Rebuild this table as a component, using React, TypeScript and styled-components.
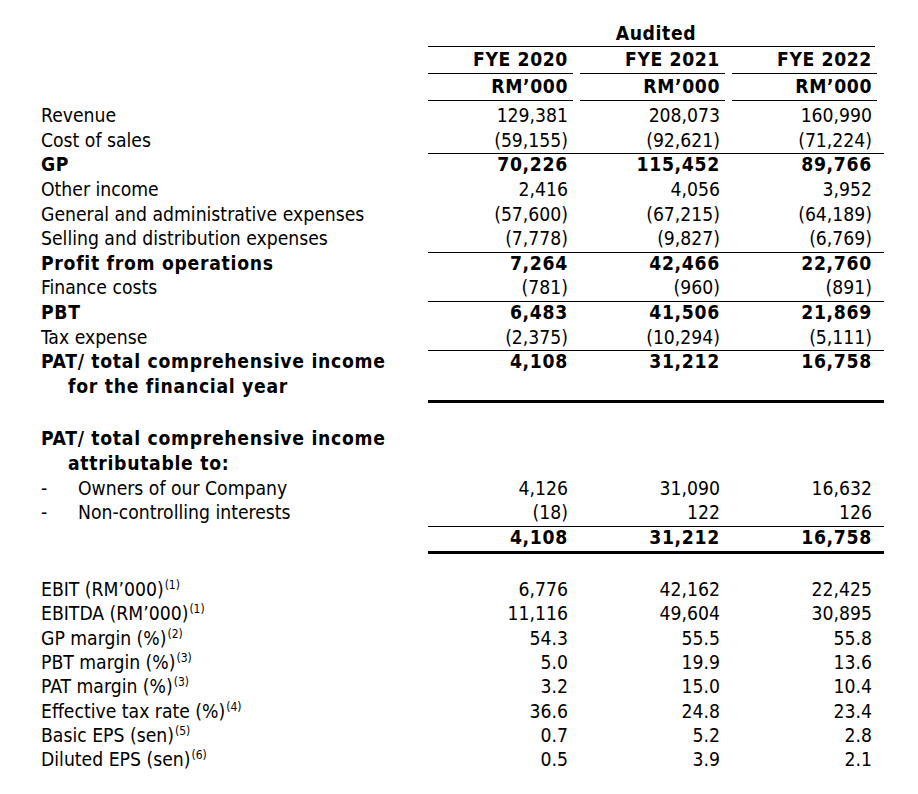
import React from "react";
import styled, { createGlobalStyle } from "styled-components";

type Rule = "none" | "thin" | "thick";

interface Line {
  label?: string;
  note?: string;
  values?: string[];
  bold?: boolean;
  indent?: boolean;
  bullet?: boolean;
  rule?: Rule;
  spacer?: boolean;
  tight?: boolean;
}

const ROW = 24.65;
const TIGHT = 24.3;

const income: Line[] = [
  { label: "Revenue", values: ["129,381", "208,073", "160,990"] },
  { label: "Cost of sales", values: ["(59,155)", "(92,621)", "(71,224)"], rule: "thin" },
  { label: "GP", values: ["70,226", "115,452", "89,766"], bold: true },
  { label: "Other income", values: ["2,416", "4,056", "3,952"] },
  { label: "General and administrative expenses", values: ["(57,600)", "(67,215)", "(64,189)"] },
  { label: "Selling and distribution expenses", values: ["(7,778)", "(9,827)", "(6,769)"], rule: "thin" },
  { label: "Profit from operations", values: ["7,264", "42,466", "22,760"], bold: true },
  { label: "Finance costs", values: ["(781)", "(960)", "(891)"], rule: "thin" },
  { label: "PBT", values: ["6,483", "41,506", "21,869"], bold: true },
  { label: "Tax expense", values: ["(2,375)", "(10,294)", "(5,111)"], rule: "thin" },
  { label: "PAT/ total comprehensive income", values: ["4,108", "31,212", "16,758"], bold: true },
  { label: "for the financial year", bold: true, indent: true, rule: "thick" },
  { spacer: true },
  { label: "PAT/ total comprehensive income", bold: true },
  { label: "attributable to:", bold: true, indent: true },
  { label: "Owners of our Company", bullet: true, values: ["4,126", "31,090", "16,632"] },
  { label: "Non-controlling interests", bullet: true, values: ["(18)", "122", "126"], rule: "thin" },
  { values: ["4,108", "31,212", "16,758"], bold: true, rule: "thick" },
  { spacer: true },
  { label: "EBIT (RM’000)", note: "(1)", values: ["6,776", "42,162", "22,425"], tight: true },
  { label: "EBITDA (RM’000)", note: "(1)", values: ["11,116", "49,604", "30,895"], tight: true },
  { label: "GP margin (%)", note: "(2)", values: ["54.3", "55.5", "55.8"], tight: true },
  { label: "PBT margin (%)", note: "(3)", values: ["5.0", "19.9", "13.6"], tight: true },
  { label: "PAT margin (%)", note: "(3)", values: ["3.2", "15.0", "10.4"], tight: true },
  { label: "Effective tax rate (%)", note: "(4)", values: ["36.6", "24.8", "23.4"], tight: true },
  { label: "Basic EPS (sen)", note: "(5)", values: ["0.7", "5.2", "2.8"], tight: true },
  { label: "Diluted EPS (sen)", note: "(6)", values: ["0.5", "3.9", "2.1"], tight: true },
];

const years = ["FYE 2020", "FYE 2021", "FYE 2022"];

const rowHeight = (line: Line) => {
  const base = line.tight ? TIGHT : ROW;
  return line.rule === "thick" ? base + 3 : base;
};

const App: React.FC = () => {
  return (
    <>
      <GlobalStyle />
      <Page>
        <Row $h={26}>
          <span />
          <Audited>Audited</Audited>
        </Row>
        <Row $h={27}>
          <span />
          {years.map((y) => (
            <HeadCell key={y}>{y}</HeadCell>
          ))}
        </Row>
        <Row $h={27}>
          <span />
          {years.map((y) => (
            <HeadCell key={y}>RM’000</HeadCell>
          ))}
        </Row>
        <Body>
          {income.map((line, i) =>
            line.spacer ? (
              <Row key={i} $h={ROW} />
            ) : (
              <Row key={i} $h={rowHeight(line)}>
                <Label $bold={line.bold} $indent={line.indent} $h={line.tight ? TIGHT : ROW}>
                  {line.bullet && <Dash>-</Dash>}
                  {line.label}
                  {line.note && <Note>{line.note}</Note>}
                </Label>
                {[0, 1, 2].map((c) => (
                  <Value
                    key={c}
                    $bold={line.bold}
                    $rule={line.rule || "none"}
                    $h={line.tight ? TIGHT : ROW}
                  >
                    {line.values ? line.values[c] : ""}
                  </Value>
                ))}
              </Row>
            )
          )}
        </Body>
      </Page>
    </>
  );
};

const GlobalStyle = createGlobalStyle`
  body {
    margin: 0;
    background: #ffffff;
    color: #000000;
    font-family: "DejaVu Sans Condensed", "DejaVu Sans", sans-serif;
  }
`;

const Page = styled.div`
  width: 918px;
  height: 794px;
  padding: 21px 0 0 41px;
  box-sizing: border-box;
  font-size: 19.2px;
`;

const Body = styled.div`
  margin-top: 3px;
`;

const Row = styled.div<{ $h: number }>`
  display: grid;
  grid-template-columns: 387px 152px 152px 152px;
  height: ${(p) => p.$h}px;
`;

const Audited = styled.div`
  grid-column: 2 / 5;
  margin-right: 9px;
  padding-left: 9px;
  text-align: center;
  font-weight: bold;
  letter-spacing: 0.6px;
  line-height: 25px;
  border-bottom: 1px solid #000;
`;

const HeadCell = styled.div`
  margin-right: 7px;
  padding-right: 5px;
  text-align: right;
  font-weight: bold;
  letter-spacing: 0.6px;
  line-height: 26px;
  border-bottom: 1px solid #000;
`;

const Label = styled.div<{ $bold?: boolean; $indent?: boolean; $h: number }>`
  white-space: nowrap;
  line-height: ${(p) => p.$h}px;
  font-weight: ${(p) => (p.$bold ? "bold" : "normal")};
  letter-spacing: ${(p) => (p.$bold ? "0.7px" : "0")};
  padding-left: ${(p) => (p.$indent ? "27px" : "0")};
`;

const Dash = styled.span`
  display: inline-block;
  width: 37px;
`;

const Note = styled.span`
  font-size: 12px;
  line-height: 0;
  position: relative;
  top: -7px;
  margin-left: 1px;
`;

const Value = styled.div<{ $bold?: boolean; $rule: Rule; $h: number }>`
  box-sizing: border-box;
  padding-right: 12px;
  text-align: right;
  line-height: ${(p) => p.$h}px;
  font-weight: ${(p) => (p.$bold ? "bold" : "normal")};
  letter-spacing: ${(p) => (p.$bold ? "0.7px" : "0")};
  border-bottom: ${(p) =>
    p.$rule === "thick" ? "3px solid #000" : p.$rule === "thin" ? "1px solid #000" : "none"};
`;

export default App;
